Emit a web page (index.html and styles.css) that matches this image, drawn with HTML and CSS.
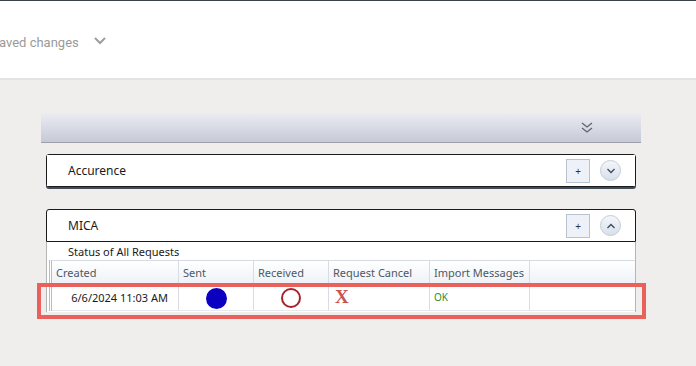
FILE: index.html
```html
<!DOCTYPE html>
<html lang="en">
<head>
    <meta charset="UTF-8">
    <title>Requests</title>
    <link rel="stylesheet" href="styles.css">
</head>
<body>
    <div class="top-bar">
        <span class="saved-text">aved changes</span>
        <svg class="saved-chevron" width="14" height="10" viewBox="0 0 14 10">
            <path d="M2 2 L7 7 L12 2" fill="none" stroke="#9e9e9e" stroke-width="2"/>
        </svg>
    </div>

    <div class="main">
        <div class="band">
            <svg class="band-toggle" width="14" height="14" viewBox="0 0 14 14">
                <path d="M2 2 L7 6 L12 2 M2 7 L7 11 L12 7" fill="none" stroke="#5f6470" stroke-width="1.3"/>
            </svg>
        </div>

        <div class="panel">
            <div class="panel-head">
                <span class="panel-title">Accurence</span>
                <span class="add-btn">+</span>
                <span class="round-btn">
                    <svg width="10" height="6" viewBox="0 0 10 6"><path d="M1.5 1 L5 4.5 L8.5 1" fill="none" stroke="#3c4a5c" stroke-width="1.3"/></svg>
                </span>
            </div>
        </div>

        <div class="panel open">
            <div class="panel-head">
                <span class="panel-title">MICA</span>
                <span class="add-btn">+</span>
                <span class="round-btn">
                    <svg width="10" height="6" viewBox="0 0 10 6"><path d="M1.5 5 L5 1.5 L8.5 5" fill="none" stroke="#3c4a5c" stroke-width="1.3"/></svg>
                </span>
            </div>
            <div class="panel-body">
                <div class="status-title">Status of All Requests</div>
                <div class="grid">
                    <div class="grid-row grid-header">
                        <div class="cell c-created">Created</div>
                        <div class="cell c-sent">Sent</div>
                        <div class="cell c-received">Received</div>
                        <div class="cell c-cancel">Request Cancel</div>
                        <div class="cell c-import">Import Messages</div>
                        <div class="cell c-rest"></div>
                    </div>
                    <div class="grid-row grid-data">
                        <div class="cell c-created date">6/6/2024 11:03 AM</div>
                        <div class="cell c-sent center"><span class="dot-full"></span></div>
                        <div class="cell c-received center"><span class="dot-empty"></span></div>
                        <div class="cell c-cancel"><span class="cancel-x">X</span></div>
                        <div class="cell c-import"><span class="ok">OK</span></div>
                        <div class="cell c-rest"></div>
                        <div class="highlight"></div>
                    </div>
                </div>
            </div>
        </div>
    </div>
</body>
</html>
```

FILE: styles.css
```css
* {
    box-sizing: border-box;
    margin: 0;
    padding: 0;
}

body {
    background-color: #efeeed;
    font-family: 'Noto Sans', sans-serif;
    font-size: 12px;
    color: #1a1a1a;
    width: 696px;
    height: 366px;
    overflow: hidden;
}

.top-bar {
    height: 80px;
    background-color: #ffffff;
    border-top: 1px solid #3d434b;
    border-bottom: 2px solid #e3e3e3;
    display: flex;
    align-items: center;
    padding-top: 6px;
}

.saved-text {
    font-family: 'Roboto', sans-serif;
    font-size: 13px;
    color: #9a9a9a;
    margin-left: -1px;
}

.saved-chevron {
    margin-left: 14px;
    margin-top: -4px;
}

.main {
    padding-left: 41px;
    width: 641px;
}

.band {
    margin-top: 33px;
    height: 30px;
    background: linear-gradient(#ebebf3, #c6cad6);
    border-bottom: 1px solid #9da1ab;
    display: flex;
    align-items: center;
    justify-content: flex-end;
    padding-right: 47px;
}

.panel {
    margin-left: 5px;
    width: 590px;
    margin-top: 11px;
    background-color: #ffffff;
    border: 1px solid #1b1b1b;
    border-radius: 3px;
    box-shadow: 0 2px 0 #3f4c5a;
}

.panel.open {
    margin-top: 22px;
    box-shadow: none;
    border: none;
    border-radius: 3px 3px 0 0;
    background: none;
}

.panel-head {
    height: 31px;
    display: flex;
    align-items: center;
    padding: 0 14px 0 21px;
    background-color: #ffffff;
}

.panel.open .panel-head {
    height: 33px;
    border: 1px solid #1b1b1b;
    border-radius: 3px 3px 0 0;
}

.panel-title {
    flex: 1;
    font-size: 12px;
}

.add-btn {
    width: 24px;
    height: 24px;
    background-color: #eef2f8;
    border: 1px solid #b9c3d0;
    display: flex;
    align-items: center;
    justify-content: center;
    font-size: 10px;
    color: #333;
}

.round-btn {
    width: 21px;
    height: 21px;
    margin-left: 10px;
    border-radius: 50%;
    border: 1px solid #c5cbd4;
    background: linear-gradient(#f4f6fa, #d8e0ec);
    display: flex;
    align-items: center;
    justify-content: center;
}

.panel-body {
    background-color: #ffffff;
    border-left: 1px solid #b5b5b5;
    border-right: 1px solid #b5b5b5;
    height: 70px;
    font-size: 11px;
}

.status-title {
    height: 18px;
    padding-left: 21px;
    line-height: 19px;
}

.grid {
    margin-left: 2px;
    border-left: 3px double #b7bcc4;
    border-top: 1px solid #d6dbe2;
}

.grid-row {
    display: flex;
    position: relative;
}

.grid-header {
    height: 23px;
    background: linear-gradient(#ffffff, #eef2f8);
    border-bottom: 1px solid #d8dde4;
    color: #4d5865;
    white-space: nowrap;
}

.grid-data {
    height: 27px;
    border-bottom: 1px solid #e6e8ec;
}

.cell {
    border-right: 1px solid #d9dde3;
    display: flex;
    align-items: center;
    padding-left: 4px;
}

.c-created { width: 127px; }
.c-sent { width: 75px; }
.c-received { width: 75px; }
.c-cancel { width: 101px; }
.c-import { width: 100px; }
.c-rest { flex: 1; border-right: none; }

.date {
    justify-content: flex-end;
    padding-right: 10px;
}

.center {
    justify-content: center;
    padding-left: 0;
}

.dot-full {
    width: 21px;
    height: 21px;
    margin-top: 2px;
    border-radius: 50%;
    background-color: #0b00bf;
}

.dot-empty {
    width: 20px;
    height: 20px;
    margin-top: 2px;
    border-radius: 50%;
    border: 2px solid #a8222c;
}

.cancel-x {
    font-family: 'Liberation Serif', serif;
    font-weight: bold;
    font-size: 19px;
    color: #c95550;
    margin-left: 2px;
}

.ok {
    font-size: 10px;
    color: #2f8f2f;
}

.highlight {
    position: absolute;
    left: -15px;
    top: -1px;
    right: -11px;
    bottom: -9px;
    border: 4px solid #e9615a;
}
```
